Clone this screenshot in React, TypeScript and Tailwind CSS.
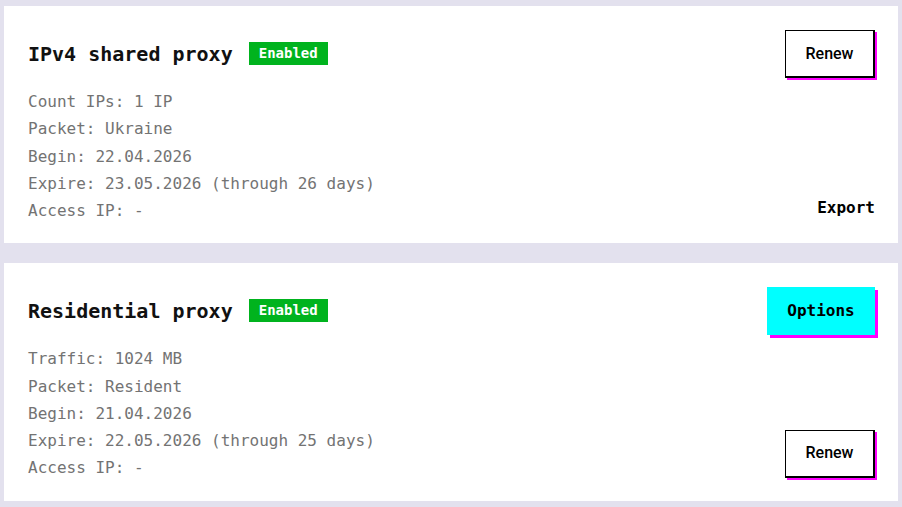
import React from 'react';

type Proxy = {
  title: string;
  lines: string[];
  top: { label: string; kind: 'renew' | 'options' };
  bottom: { label: string; kind: 'renew' | 'export' };
};

const proxies: Proxy[] = [
  {
    title: 'IPv4 shared proxy',
    lines: ['Count IPs: 1 IP', 'Packet: Ukraine', 'Begin: 22.04.2026', 'Expire: 23.05.2026 (through 26 days)', 'Access IP: -'],
    top: { label: 'Renew', kind: 'renew' },
    bottom: { label: 'Export', kind: 'export' },
  },
  {
    title: 'Residential proxy',
    lines: ['Traffic: 1024 MB', 'Packet: Resident', 'Begin: 21.04.2026', 'Expire: 22.05.2026 (through 25 days)', 'Access IP: -'],
    top: { label: 'Options', kind: 'options' },
    bottom: { label: 'Renew', kind: 'renew' },
  },
];

const mono = "font-['DejaVu_Sans_Mono','Liberation_Mono',monospace]";

const ActionButton = ({ label, kind }: { label: string; kind: string }) => {
  if (kind === 'export') {
    return <button className={`${mono} text-[16px] leading-6 font-bold text-black`}>{label}</button>;
  }
  if (kind === 'options') {
    return (
      <button className={`${mono} w-[108px] h-12 bg-[#00ffff] text-[16px] font-bold text-black shadow-[3px_3px_0_#ff00ff]`}>
        {label}
      </button>
    );
  }
  return (
    <button className="font-['Roboto',sans-serif] w-[90px] h-12 bg-white border border-r-2 border-b-2 border-black text-[16px] font-medium text-black shadow-[2px_2px_0_#ff00ff]">
      {label}
    </button>
  );
};

const App = () => {
  return (
    <div className={`min-h-screen bg-[#e3e1ee] px-1 pt-1.5 pb-2 flex flex-col gap-5 ${mono}`}>
      {proxies.map(p => (
        <div key={p.title} className="bg-white flex justify-between pl-6 pr-[23px] pt-6 pb-[19px]">
          <div>
            <div className="h-12 flex items-center gap-4">
              <h2 className="text-[20px] font-bold text-[#111]">{p.title}</h2>
              <span className="bg-[#00b31e] text-white text-[14px] font-bold px-[10px] leading-[23px] mb-0.5">Enabled</span>
            </div>
            <div className="mt-[10px] text-[16px] leading-[27.25px] text-[#737373]">
              {p.lines.map(line => (
                <div key={line}>{line}</div>
              ))}
            </div>
          </div>
          <div className="flex flex-col justify-between items-end pb-1">
            <ActionButton label={p.top.label} kind={p.top.kind} />
            <ActionButton label={p.bottom.label} kind={p.bottom.kind} />
          </div>
        </div>
      ))}
    </div>
  );
};

export default App;
